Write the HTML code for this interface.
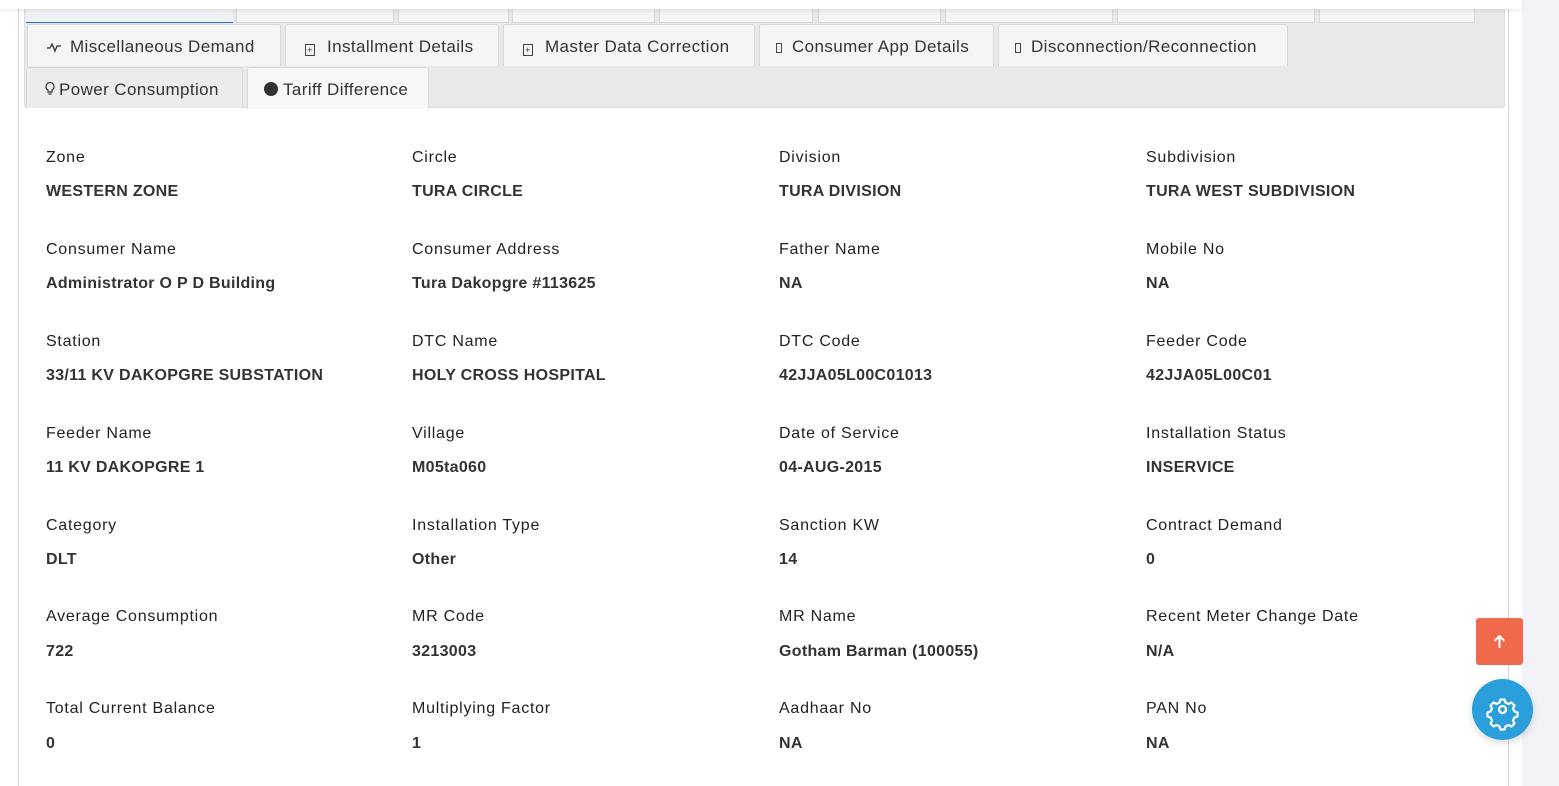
<!DOCTYPE html>
<html><head><meta charset="utf-8"><style>
*{box-sizing:border-box;margin:0;padding:0}
html,body{width:1559px;height:786px;overflow:hidden}
body{background:#fff;font-family:"Liberation Sans",sans-serif;position:relative;color:#222}
.rs{position:absolute;left:1522px;top:0;width:37px;height:786px;background:#f2f2f8}
.card{position:absolute;left:18px;top:0;width:1491px;height:786px;border:1px solid #d6d6d6;border-bottom:none;background:#fff}
.tabs{position:absolute;left:24px;top:0;width:1481px;height:108px;background:#e9e9e9;border:1px solid #ddd;border-radius:0 0 3px 3px}
.t{position:absolute;background:#f5f5f5;border:1px solid #d8d8d8;border-bottom:none;border-radius:3px 3px 0 0;font-size:17px;letter-spacing:.4px;color:#333;line-height:44px;padding-left:16px;white-space:nowrap}
.top{position:absolute;top:0;height:23px;background:#f5f5f5;border:1px solid #d8d8d8;border-top:none}
.hdr{position:absolute;left:0;top:0;width:1522px;height:9px;background:#fff;box-shadow:0 2px 4px rgba(0,0,0,.08);z-index:5}
.l{position:absolute;font-size:16px;letter-spacing:.75px;color:#222;white-space:nowrap}
.v{position:absolute;font-size:16px;font-weight:bold;letter-spacing:.3px;color:#333;white-space:nowrap}
.ic{display:inline-block;width:10px;height:12px;border:1px solid #444;margin-right:12px;vertical-align:-1px;font-size:9px;line-height:10px;text-align:center}
</style></head><body>
<div class="rs"></div>
<div class="card"></div>
<div class="tabs"></div>
<div class="top" style="left:26px;width:207px;background:#eef0f4;border:none;border-bottom:1px solid #2a6fcf"></div>
<div class="top" style="left:236px;width:158px"></div>
<div class="top" style="left:398px;width:111px"></div>
<div class="top" style="left:512px;width:143px"></div>
<div class="top" style="left:659px;width:154px"></div>
<div class="top" style="left:818px;width:123px"></div>
<div class="top" style="left:945px;width:168px"></div>
<div class="top" style="left:1117px;width:198px"></div>
<div class="top" style="left:1319px;width:156px"></div>
<div class="hdr"></div>
<div class="t" style="left:27px;top:24px;width:254px;height:42px;padding-left:18px"><svg width="16" height="12" viewBox="0 0 16 12" style="margin-right:8px;vertical-align:-1px"><path d="M1 7h3l2-4 3 7 2-5h4" stroke="#333" stroke-width="1.3" fill="none"/></svg>Miscellaneous Demand</div>
<div class="t" style="left:285px;top:24px;width:214px;height:42px;padding-left:19px"><span class="ic">+</span>Installment Details</div>
<div class="t" style="left:503px;top:24px;width:252px;height:42px;padding-left:19px"><span class="ic">+</span>Master Data Correction</div>
<div class="t" style="left:759px;top:24px;width:235px;height:42px"><span class="ic" style="width:6px;height:10px;margin-right:10px"></span>Consumer App Details</div>
<div class="t" style="left:998px;top:24px;width:290px;height:42px"><span class="ic" style="width:6px;height:10px;margin-right:10px"></span>Disconnection/Reconnection</div>
<div class="t" style="left:26px;top:67px;width:217px;height:41px;background:#ececec;padding-left:18px"><svg width="10" height="14" viewBox="0 0 10 14" style="margin-right:4px;vertical-align:-1px"><path d="M3 10V8C1 7 1 5 1 4.5A4 4 0 0 1 9 4.5C9 5 9 7 7 8V10ZM3.5 12h3" stroke="#333" stroke-width="1.2" fill="none"/></svg>Power Consumption</div>
<div class="t" style="left:247px;top:67px;width:182px;height:42px;background:#f7f7f7;padding-left:16px"><span style="display:inline-block;width:14px;height:14px;border-radius:50%;background:#333;margin-right:5px;vertical-align:-1px"></span>Tariff Difference</div>

<div style="position:absolute;left:0;top:2px;width:1px;height:1px">
<div class="l" style="left:46px;top:147px">Zone</div><div class="v" style="left:46px;top:181px">WESTERN ZONE</div>
<div class="l" style="left:412px;top:147px">Circle</div><div class="v" style="left:412px;top:181px">TURA CIRCLE</div>
<div class="l" style="left:779px;top:147px">Division</div><div class="v" style="left:779px;top:181px">TURA DIVISION</div>
<div class="l" style="left:1146px;top:147px">Subdivision</div><div class="v" style="left:1146px;top:181px">TURA WEST SUBDIVISION</div>

<div class="l" style="left:46px;top:239px">Consumer Name</div><div class="v" style="left:46px;top:273px">Administrator O P D Building</div>
<div class="l" style="left:412px;top:239px">Consumer Address</div><div class="v" style="left:412px;top:273px">Tura Dakopgre #113625</div>
<div class="l" style="left:779px;top:239px">Father Name</div><div class="v" style="left:779px;top:273px">NA</div>
<div class="l" style="left:1146px;top:239px">Mobile No</div><div class="v" style="left:1146px;top:273px">NA</div>

<div class="l" style="left:46px;top:331px">Station</div><div class="v" style="left:46px;top:365px">33/11 KV DAKOPGRE SUBSTATION</div>
<div class="l" style="left:412px;top:331px">DTC Name</div><div class="v" style="left:412px;top:365px">HOLY CROSS HOSPITAL</div>
<div class="l" style="left:779px;top:331px">DTC Code</div><div class="v" style="left:779px;top:365px">42JJA05L00C01013</div>
<div class="l" style="left:1146px;top:331px">Feeder Code</div><div class="v" style="left:1146px;top:365px">42JJA05L00C01</div>

<div class="l" style="left:46px;top:423px">Feeder Name</div><div class="v" style="left:46px;top:457px">11 KV DAKOPGRE 1</div>
<div class="l" style="left:412px;top:423px">Village</div><div class="v" style="left:412px;top:457px">M05ta060</div>
<div class="l" style="left:779px;top:423px">Date of Service</div><div class="v" style="left:779px;top:457px">04-AUG-2015</div>
<div class="l" style="left:1146px;top:423px">Installation Status</div><div class="v" style="left:1146px;top:457px">INSERVICE</div>

<div class="l" style="left:46px;top:515px">Category</div><div class="v" style="left:46px;top:549px">DLT</div>
<div class="l" style="left:412px;top:515px">Installation Type</div><div class="v" style="left:412px;top:549px">Other</div>
<div class="l" style="left:779px;top:515px">Sanction KW</div><div class="v" style="left:779px;top:549px">14</div>
<div class="l" style="left:1146px;top:515px">Contract Demand</div><div class="v" style="left:1146px;top:549px">0</div>

<div class="l" style="left:46px;top:606px">Average Consumption</div><div class="v" style="left:46px;top:641px">722</div>
<div class="l" style="left:412px;top:606px">MR Code</div><div class="v" style="left:412px;top:641px">3213003</div>
<div class="l" style="left:779px;top:606px">MR Name</div><div class="v" style="left:779px;top:641px">Gotham Barman (100055)</div>
<div class="l" style="left:1146px;top:606px">Recent Meter Change Date</div><div class="v" style="left:1146px;top:641px">N/A</div>

<div class="l" style="left:46px;top:698px">Total Current Balance</div><div class="v" style="left:46px;top:733px">0</div>
<div class="l" style="left:412px;top:698px">Multiplying Factor</div><div class="v" style="left:412px;top:733px">1</div>
<div class="l" style="left:779px;top:698px">Aadhaar No</div><div class="v" style="left:779px;top:733px">NA</div>
<div class="l" style="left:1146px;top:698px">PAN No</div><div class="v" style="left:1146px;top:733px">NA</div>
</div>

<div style="position:absolute;left:1476px;top:618px;width:47px;height:47px;background:#f0694a;border-radius:3px">
<svg width="47" height="47" viewBox="0 0 47 47"><path d="M23.5 30V18M18.5 23L23.5 18L28.5 23" stroke="#fff" stroke-width="2" fill="none"/></svg></div>
<div style="position:absolute;left:1472px;top:679px;width:61px;height:61px;background:#2a9fdb;border-radius:50%;box-shadow:0 3px 8px rgba(0,0,0,.15)">
<svg width="61" height="61" viewBox="0 0 61 61"><g transform="translate(30.5 30.5)" stroke="#fff" stroke-width="2.2" fill="none"><path d="M-2-10h4l1 3 3 1.5 3-1.5 3 3-1.5 3 1.5 3 3 1v4l-3 1-1.5 3 1.5 3-3 3-3-1.5-3 1.5-1 3h-4l-1-3-3-1.5-3 1.5-3-3 1.5-3-1.5-3-3-1v-4l3-1 1.5-3-1.5-3 3-3 3 1.5 3-1.5z" stroke-linejoin="round"/><circle r="3.5"/></g></svg></div>
</body></html>
